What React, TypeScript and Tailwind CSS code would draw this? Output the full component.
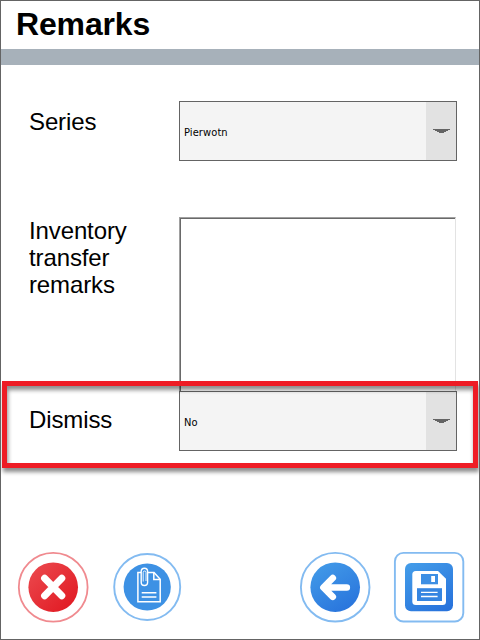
import type { ReactNode } from "react";

function Label({ children }: { children: ReactNode }) {
  return (
    <div className="w-[150px] shrink-0 pr-6 text-[24px] leading-[27px] tracking-[-0.12px] text-black">{children}</div>
  );
}

function Select({ value }: { value: string }) {
  return (
    <div className="flex h-[60px] w-[278px] border border-[#646464] bg-[#f4f4f4]">
      <div className="flex flex-1 items-center pl-1 pt-1 font-['DejaVu_Sans_Condensed','DejaVu_Sans',sans-serif] text-[11px] tracking-[0.1px] text-black">
        {value}
      </div>
      <div className="flex w-[30px] justify-center bg-[#e2e2e2] pt-[27px]">
        <svg width="17" height="4" viewBox="0 0 17 4" shapeRendering="crispEdges" fill="#646464">
          <path d="M0 0h17v1H0zM2 1h13v1H2zM4 2h9v1H4zM6 3h5v1H6z" />
        </svg>
      </div>
    </div>
  );
}

function Gradients() {
  return (
    <svg width="0" height="0" className="absolute">
      <defs>
        <linearGradient id="red" x1="0" y1="0" x2="1" y2="1">
          <stop offset="0" stopColor="#ec4b50" />
          <stop offset="1" stopColor="#e0161f" />
        </linearGradient>
        <linearGradient id="blue" x1="0.2" y1="0" x2="0.8" y2="1">
          <stop offset="0" stopColor="#429ae8" />
          <stop offset="1" stopColor="#2873dc" />
        </linearGradient>
      </defs>
    </svg>
  );
}

function CancelButton() {
  return (
    <button aria-label="Cancel" className="ml-4">
      <svg width="72" height="72" viewBox="0 0 72 72" fill="none">
        <circle cx="36.2" cy="36.2" r="34.4" stroke="#f08a8f" strokeWidth="1.8" />
        <circle cx="36.2" cy="36.2" r="24.8" fill="url(#red)" />
        <path d="M27.6 27.2 44.8 44.8M44.8 27.2 27.6 44.8" stroke="#fff" strokeWidth="7" strokeLinecap="round" />
      </svg>
    </button>
  );
}

function AttachmentButton() {
  return (
    <button aria-label="Attachments" className="ml-6">
      <svg width="72" height="72" viewBox="0 0 72 72" fill="none">
        <circle cx="34.2" cy="36" r="33" stroke="#83bbf1" strokeWidth="1.9" />
        <circle cx="34.2" cy="36" r="23.6" fill="#3d91e4" />
        <g stroke="#fff" strokeWidth="1.5">
          <path d="M24.9 21.5H41L47.2 28.2V50.8H24.9Z" />
          <path d="M40.8 21.5V28.4H47.2" />
          <path d="M28.7 41.7H43.4M28.7 46H43.4" />
          <rect x="28.2" y="17.3" width="6.4" height="17.2" rx="3.2" fill="#3d91e4" strokeWidth="1.4" />
          <path d="M30.2 30.5V21.4A1.4 1.4 0 0 1 33 21.4V30" strokeWidth="0.9" />
        </g>
      </svg>
    </button>
  );
}

function BackButton() {
  return (
    <button aria-label="Back" className="ml-auto">
      <svg width="72" height="72" viewBox="0 0 72 72" fill="none">
        <circle cx="36.2" cy="36.2" r="34.3" stroke="#83bbf1" strokeWidth="1.9" />
        <circle cx="36.2" cy="36.2" r="24.8" fill="url(#blue)" />
        <path d="M33.8 27 24.4 36.5 33.8 45.8M25 36.5H47.8" stroke="#fff" strokeWidth="6.6" strokeLinecap="round" strokeLinejoin="round" />
      </svg>
    </button>
  );
}

function SaveButton() {
  return (
    <button aria-label="Save" className="ml-[22px] mr-[14px]">
      <svg width="72" height="72" viewBox="0 0 72 72" fill="none">
        <rect x="1.9" y="1.9" width="68.4" height="68.6" rx="8.5" stroke="#83bbf1" strokeWidth="1.9" />
        <rect x="12" y="12" width="48" height="48.3" rx="6" fill="url(#blue)" />
        <path d="M23 20H45L53 27.8V50.5A3.5 3.5 0 0 1 49.5 54H22.8A3.5 3.5 0 0 1 19.3 50.5V23.5A3.5 3.5 0 0 1 22.8 20Z" fill="#fff" />
        <path d="M28 23H45V33.3H28Z" fill="#3d8fe4" />
        <path d="M38.2 25H42V31H38.2Z" fill="#fff" />
        <path d="M24 37.2H49V50H24Z" fill="#3585e1" />
        <path d="M28 41.4H44.6M28 45.5H44.6" stroke="#fff" strokeWidth="1.3" />
      </svg>
    </button>
  );
}

export default function App() {
  return (
    <main className="relative flex h-[640px] w-[480px] flex-col overflow-hidden border border-[#646464] bg-white font-['Liberation_Sans',Arial,sans-serif]">
      <Gradients />
      <header className="h-16 shrink-0 border-b-[16px] border-[#a7b1ba] pl-[15px] pt-[5px]">
        <h1 className="text-[32px] font-bold leading-9 tracking-[-0.15px] text-black">Remarks</h1>
      </header>
      <section className="flex flex-col pl-7 pt-9">
        <div className="flex h-[116px]">
          <div className="pt-[7px]"><Label>Series</Label></div>
          <Select value="Pierwotn" />
        </div>
        <div className="flex h-[174px]">
          <Label>Inventory transfer remarks</Label>
          <div className="w-[277px] border border-b-0 border-l-[#a0a0a0] border-r-[#e3e3e3] border-t-[#a0a0a0]">
            <div className="h-full border-l border-t border-[#696969]" />
          </div>
        </div>
        <div className="flex">
          <div className="pt-[15px]"><Label>Dismiss</Label></div>
          <Select value="No" />
        </div>
      </section>
      <footer className="mt-auto flex pb-4">
        <CancelButton />
        <AttachmentButton />
        <BackButton />
        <SaveButton />
      </footer>
      <div className="pointer-events-none absolute left-px top-[380px] h-[87px] w-[476px] border-[5px] border-[#ee1c25] shadow-[1px_4px_4px_rgba(0,0,0,0.45),inset_1px_4px_4px_rgba(0,0,0,0.45)]" />
    </main>
  );
}
